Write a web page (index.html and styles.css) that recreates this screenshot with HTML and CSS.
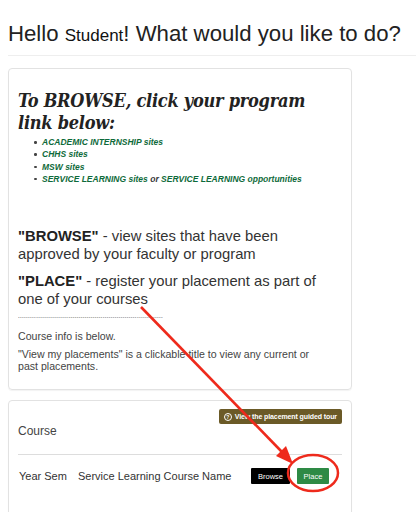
FILE: index.html
```html
<!DOCTYPE html>
<html>
<head>
<meta charset="utf-8">
<link rel="stylesheet" href="styles.css">
</head>
<body>
<h1 class="hello">Hello <span class="name">Student</span>! What would you like to do?</h1>
<hr class="rule">
<div class="card intro">
  <h2 class="browse-title">To BROWSE, click your program link below:</h2>
  <ul class="links">
    <li><a>ACADEMIC INTERNSHIP</a> sites</li>
    <li><a>CHHS</a> sites</li>
    <li><a>MSW</a> sites</li>
    <li><a>SERVICE LEARNING</a> sites <span class="or">or</span> <a>SERVICE LEARNING</a> opportunities</li>
  </ul>
  <p class="big"><b>"BROWSE"</b> - view sites that have been approved by your faculty or program</p>
  <p class="big"><b>"PLACE"</b> - register your placement as part of one of your courses</p>
  <div class="dashes">------------------------------------------------------------------------</div>
  <p class="small">Course info is below.</p>
  <p class="small">"View my placements" is a clickable title to view any current or past placements.</p>
</div>
<div class="card courses">
  <div class="tour-row"><span class="tour"><span class="q">?</span> View the placement guided tour</span></div>
  <div class="course-head">Course</div>
  <div class="course-row">
    <span class="sem">Year Sem</span>
    <span class="cname">Service Learning Course Name</span>
    <span class="btns"><span class="btn browse">Browse</span><span class="btn place">Place</span></span>
  </div>
</div>
<svg class="annot" width="416" height="512" viewBox="0 0 416 512">
  <line x1="141" y1="307" x2="282" y2="452" stroke="#ee2a1c" stroke-width="2.6"/>
  <polygon points="293,464 276,456 286,446" fill="#ee2a1c"/>
  <ellipse cx="313" cy="473" rx="25" ry="18" fill="none" stroke="#ee2a1c" stroke-width="2.5"/>
</svg>
</body>
</html>
```
FILE: styles.css
```css
html, body { margin: 0; padding: 0; background: #fff; }
body {
  position: relative;
  width: 416px;
  height: 512px;
  overflow: hidden;
  font-family: "Liberation Sans", Arial, sans-serif;
  color: #333;
  padding: 0 0 0 8px;
  box-sizing: border-box;
}
.hello {
  margin: 0;
  padding-top: 21px;
  font-weight: normal;
  font-size: 22.2px;
  line-height: 26px;
  color: #222;
  white-space: nowrap;
}
.hello .name { font-size: 17px; color: #111; }
.rule {
  margin: 6px 0 12px 0;
  border: 0;
  border-top: 1px solid #eee;
}
.card {
  width: 344px;
  box-sizing: border-box;
  border: 1px solid #e2e2e2;
  border-radius: 4px;
  padding: 0 9px;
  box-shadow: 0 1px 1px rgba(0,0,0,0.05);
}
.intro { height: 322px; padding-top: 21px; }
.browse-title {
  margin: 0;
  font-family: "DejaVu Serif Condensed", "DejaVu Serif", serif;
  font-stretch: condensed;
  font-style: italic;
  font-weight: bold;
  font-size: 18px;
  line-height: 22px;
  color: #222;
  letter-spacing: -0.25px;
}
.links {
  margin: 2px 0 0 0;
  padding-left: 24px;
  font-size: 8.5px;
  line-height: 12.3px;
  font-weight: bold;
  font-style: italic;
  color: #0e6a3a;
}
.links li { list-style: none; position: relative; }
.links li::before {
  content: "";
  position: absolute;
  left: -8px;
  top: 5px;
  width: 2.5px;
  height: 2.5px;
  border-radius: 50%;
  background: #444;
}
.links .or { color: #333; }
.big {
  margin: 0 0 10px 0;
  font-size: 14.8px;
  line-height: 17.5px;
  color: #333;
}
.links + .big { margin-top: 43px; }
.big b { color: #222; }
.dashes {
  font-size: 5px;
  letter-spacing: 0.35px;
  line-height: 6px;
  color: #333;
  width: 156px;
  overflow: hidden;
  white-space: nowrap;
  margin-top: -4px;
}
.small {
  margin: 6px 0 0 0;
  font-size: 10.6px;
  line-height: 12px;
  color: #444;
  max-width: 312px;
}
.dashes + .small { margin-top: 10px; }
.courses { margin-top: 10px; height: 116px; padding-top: 8px; }
.tour-row { display: flex; justify-content: flex-end; }
.tour {
  display: inline-flex;
  align-items: center;
  gap: 3px;
  background: #6b5a27;
  color: #fff;
  font-size: 7px;
  font-weight: bold;
  height: 15px;
  padding: 0 5px;
  border-radius: 2px;
  white-space: nowrap;
  letter-spacing: -0.1px;
}
.q {
  display: inline-flex;
  align-items: center;
  justify-content: center;
  width: 6px;
  height: 6px;
  border: 1px solid #fff;
  border-radius: 50%;
  font-size: 5px;
}
.course-head {
  font-size: 12px;
  color: #444;
  padding: 0 0 16px 0;
  border-bottom: 1px solid #ddd;
}
.course-row {
  display: flex;
  align-items: center;
  height: 42px;
  font-size: 11px;
  color: #333;
  padding-left: 1px;
}
.sem { width: 59px; }
.cname { flex: 1; }
.btns { display: flex; gap: 7px; padding-right: 13px; }
.btn {
  display: inline-flex;
  align-items: center;
  justify-content: center;
  height: 16px;
  font-size: 7.5px;
  color: #fff;
  border-radius: 1px;
}
.browse { background: #000; width: 39px; }
.place { background: #2e8a45; width: 32px; }
.annot { position: absolute; left: 0; top: 0; pointer-events: none; }
```
